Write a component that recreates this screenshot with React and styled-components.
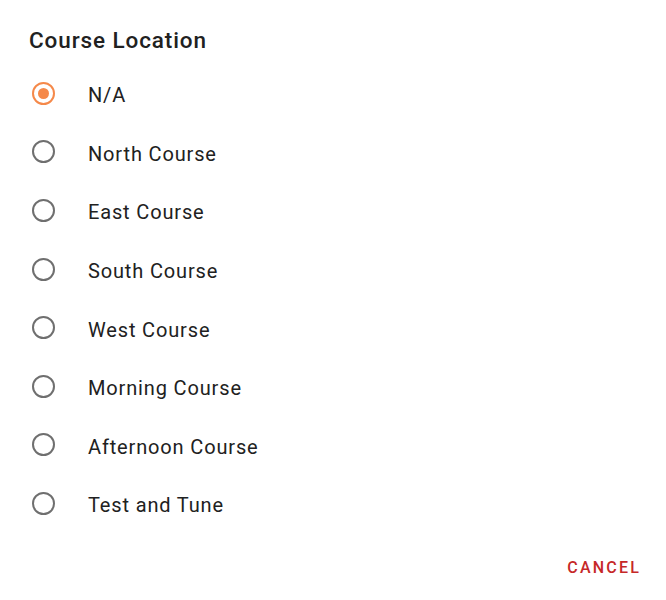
import React, { useState } from 'react';
import styled, { createGlobalStyle } from 'styled-components';

const GlobalStyle = createGlobalStyle`
  html, body {
    margin: 0;
    padding: 0;
    background: #ffffff;
  }
  body {
    font-family: Roboto, "Noto Sans", "Liberation Sans", sans-serif;
  }
`

const Dialog = styled.div`
  width: 666px;
  height: 600px;
  box-sizing: border-box;
  background: #ffffff;
  display: flex;
  flex-direction: column;
  padding: 26px 0 0 0;
`

const Title = styled.h2`
  margin: 0 0 0 29px;
  font-size: 22.5px;
  font-weight: 500;
  letter-spacing: 0.9px;
  color: #212121;
  line-height: 28px;
`

const List = styled.div`
  display: flex;
  flex-direction: column;
  margin-top: 10px;
`

const Option = styled.label`
  display: flex;
  align-items: center;
  height: 58.6px;
  padding-left: 32px;
  cursor: pointer;
`

const Radio = styled.span`
  width: 23px;
  height: 23px;
  box-sizing: border-box;
  border-radius: 50%;
  border: 2.4px solid ${(p) => (p.checked ? '#f5894a' : '#6f6f6f')};
  display: flex;
  align-items: center;
  justify-content: center;
  flex-shrink: 0;

  &::after {
    content: '';
    width: 11px;
    height: 11px;
    border-radius: 50%;
    background: #f5894a;
    display: ${(p) => (p.checked ? 'block' : 'none')};
  }
`

const Label = styled.span`
  margin-left: 33px;
  padding-top: 4px;
  font-size: 20px;
  color: #212121;
  letter-spacing: 0.85px;
`

const Actions = styled.div`
  display: flex;
  justify-content: flex-end;
  padding: 25px 25px 0 0;
`

const CancelButton = styled.button`
  background: none;
  border: none;
  padding: 0;
  font-family: Roboto, "Liberation Sans", sans-serif;
  font-size: 16px;
  font-weight: 500;
  letter-spacing: 2.2px;
  color: #c62828;
  cursor: pointer;
`

const options = [
  'N/A',
  'North Course',
  'East Course',
  'South Course',
  'West Course',
  'Morning Course',
  'Afternoon Course',
  'Test and Tune',
]

export default function App() {
  const [selected, setSelected] = useState('N/A')

  return (
    <>
      <GlobalStyle />
      <Dialog>
        <Title>Course Location</Title>
        <List>
          {options.map((opt) => (
            <Option key={opt} onClick={() => setSelected(opt)}>
              <Radio checked={selected === opt} />
              <Label>{opt}</Label>
            </Option>
          ))}
        </List>
        <Actions>
          <CancelButton>CANCEL</CancelButton>
        </Actions>
      </Dialog>
    </>
  )
}
